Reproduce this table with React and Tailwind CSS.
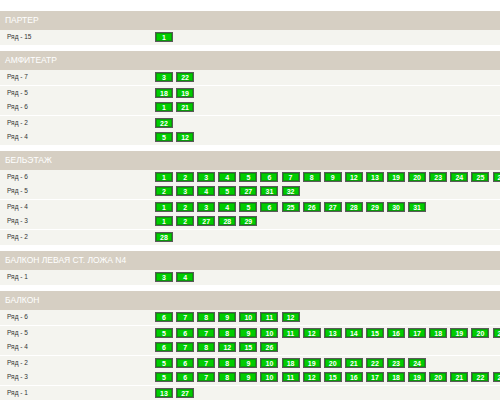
import React from "react";

const data = [
  {
    title: "ПАРТЕР",
    groups: [[["Ряд - 15", [1]]]],
  },
  {
    title: "АМФИТЕАТР",
    groups: [
      [["Ряд - 7", [3, 22]]],
      [
        ["Ряд - 5", [18, 19]],
        ["Ряд - 6", [1, 21]],
      ],
      [
        ["Ряд - 2", [22]],
        ["Ряд - 4", [5, 12]],
      ],
    ],
  },
  {
    title: "БЕЛЬЭТАЖ",
    groups: [
      [
        ["Ряд - 6", [1, 2, 3, 4, 5, 6, 7, 8, 9, 12, 13, 19, 20, 23, 24, 25, 26]],
        ["Ряд - 5", [2, 3, 4, 5, 27, 31, 32]],
      ],
      [
        ["Ряд - 4", [1, 2, 3, 4, 5, 6, 25, 26, 27, 28, 29, 30, 31]],
        ["Ряд - 3", [1, 2, 27, 28, 29]],
      ],
      [["Ряд - 2", [28]]],
    ],
  },
  {
    title: "БАЛКОН ЛЕВАЯ СТ. ЛОЖА N4",
    groups: [[["Ряд - 1", [3, 4]]]],
  },
  {
    title: "БАЛКОН",
    groups: [
      [["Ряд - 6", [6, 7, 8, 9, 10, 11, 12]]],
      [
        ["Ряд - 5", [5, 6, 7, 8, 9, 10, 11, 12, 13, 14, 15, 16, 17, 18, 19, 20, 21]],
        ["Ряд - 4", [6, 7, 8, 12, 15, 26]],
      ],
      [
        ["Ряд - 2", [5, 6, 7, 8, 9, 10, 18, 19, 20, 21, 22, 23, 24]],
        ["Ряд - 3", [5, 6, 7, 8, 9, 10, 11, 12, 15, 16, 17, 18, 19, 20, 21, 22, 23]],
      ],
      [["Ряд - 1", [13, 27]]],
    ],
  },
];

function Seat({ n }) {
  return (
    <div className="w-[18px] h-[10px] shrink-0 border border-[#5a5a5a] bg-[#00cc00] shadow-[inset_0_0_0_1px_#0a9a0a] flex items-center justify-center text-white font-bold text-[7px] leading-none">
      {n}
    </div>
  );
}

function Line({ label, seats }) {
  return (
    <div className="h-[14px] flex items-center">
      <div className="w-[155px] shrink-0 pl-[7px] text-[6.5px] text-[#333]">{label}</div>
      <div className="flex gap-[3.1px] whitespace-nowrap">
        {seats.map((s, i) => (
          <Seat key={i} n={s} />
        ))}
      </div>
    </div>
  );
}

export default function App() {
  return (
    <div
      className="w-[500px] h-[400px] overflow-hidden bg-white pt-[11px] flex flex-col gap-[5px]"
      style={{ fontFamily: '"Liberation Sans", Arial, sans-serif' }}
    >
      {data.map((sec, i) => (
        <div key={i} className="shrink-0">
          <div className="h-[19px] bg-[#d6cfc3] text-white text-[8.5px] pl-[5px] flex items-center">
            {sec.title}
          </div>
          {sec.groups.map((g, j) => (
            <div key={j} className="bg-[#f4f4ef] pb-[1px] border-b border-white">
              {g.map(([label, seats], k) => (
                <Line key={k} label={label} seats={seats} />
              ))}
            </div>
          ))}
        </div>
      ))}
    </div>
  );
}
